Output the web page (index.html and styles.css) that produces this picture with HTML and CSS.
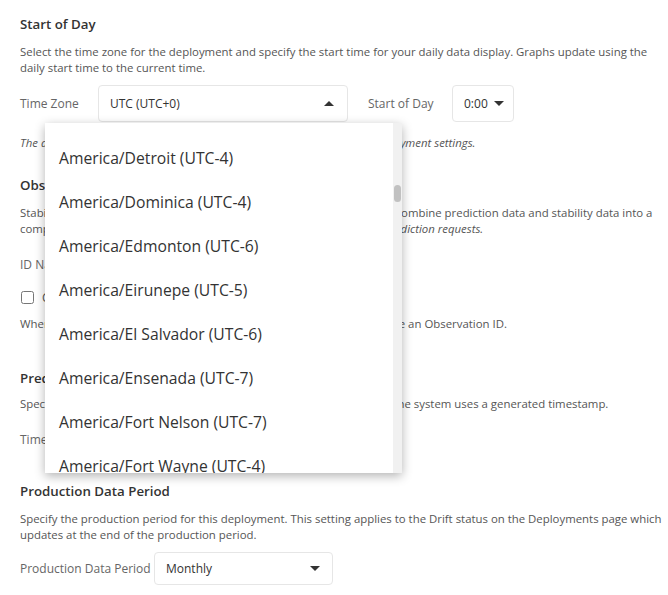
FILE: index.html
```html
<!DOCTYPE html>
<html lang="en">
<head>
    <meta charset="UTF-8">
    <meta name="viewport" content="width=device-width, initial-scale=1.0">
    <title>Deployment Settings</title>
    <link rel="stylesheet" href="styles.css">
</head>
<body>
    <div class="settings">
        <section class="section section-day">
            <h2>Start of Day</h2>
            <p>Select the time zone for the deployment and specify the start time for your daily data display. Graphs update using the daily start time to the current time.</p>
            <div class="field-row">
                <span class="field-label label-tz">Time Zone</span>
                <div class="select select-tz open">
                    <span>UTC (UTC+0)</span>
                    <span class="caret caret-up"></span>
                    <div class="dropdown">
                        <ul class="options">
                            <li>America/Denver (UTC-6)</li>
                            <li>America/Detroit (UTC-4)</li>
                            <li>America/Dominica (UTC-4)</li>
                            <li>America/Edmonton (UTC-6)</li>
                            <li>America/Eirunepe (UTC-5)</li>
                            <li>America/El Salvador (UTC-6)</li>
                            <li>America/Ensenada (UTC-7)</li>
                            <li>America/Fort Nelson (UTC-7)</li>
                            <li>America/Fort Wayne (UTC-4)</li>
                        </ul>
                        <div class="scrollbar"><div class="thumb"></div></div>
                    </div>
                </div>
                <span class="field-label label-start">Start of Day</span>
                <div class="select select-time">
                    <span>0:00</span>
                    <span class="caret"></span>
                </div>
            </div>
            <p class="note">The deployment time zone applies to all dates and times shown in the deployment settings.</p>
        </section>

        <section class="section section-obs">
            <h2>Observation ID</h2>
            <p>Stability data can include an Observation ID. The system uses the ID to combine prediction data and stability data into a complete record. <em>The ID field must also be sent with all of the incoming prediction requests.</em></p>
            <div class="field-row row-id">
                <span class="field-label">ID Name</span>
            </div>
            <label class="check-row">
                <input type="checkbox">
                <span>Generate Observation IDs</span>
            </label>
            <p class="hint">When selected, the system creates an ID for requests that do not include an Observation ID.</p>
        </section>

        <section class="section section-pred">
            <h2>Prediction Timestamp</h2>
            <p>Specify the timestamp field in your prediction dataset. If not specified, the system uses a generated timestamp.</p>
            <div class="field-row row-id">
                <span class="field-label">Timestamp Field</span>
            </div>
        </section>

        <section class="section section-period">
            <h2>Production Data Period</h2>
            <p>Specify the production period for this deployment. This setting applies to the Drift status on the Deployments page which updates at the end of the production period.</p>
            <div class="field-row row-period">
                <span class="field-label label-period">Production Data Period</span>
                <div class="select select-period">
                    <span>Monthly</span>
                    <span class="caret"></span>
                </div>
            </div>
        </section>
    </div>
</body>
</html>
```
FILE: styles.css
```css
body {
    margin: 0;
    font-family: 'Open Sans', 'Noto Sans', sans-serif;
    background-color: #fff;
    color: #555;
}

.settings {
    padding: 14px 4px 0 20px;
}

.section {
    margin-bottom: 24px;
}

h2 {
    margin: 0 0 10px;
    font-size: 13.3px;
    line-height: 20px;
    font-weight: 600;
    color: #333;
}

p {
    margin: 0;
    font-size: 11.4px;
    line-height: 16px;
}

.field-row {
    display: flex;
    align-items: center;
    height: 37px;
    margin-top: 9px;
}

.field-label {
    font-size: 12px;
    color: #666;
}

.label-tz {
    width: 78px;
}

.label-start {
    margin-left: 20px;
    width: 84px;
}

.label-period {
    width: 134px;
}

.select {
    position: relative;
    box-sizing: border-box;
    display: flex;
    align-items: center;
    justify-content: space-between;
    height: 37px;
    padding: 0 13px 0 11px;
    border: 1px solid #e6e6e6;
    border-radius: 4px;
    font-size: 12px;
    color: #333;
}

.select-tz {
    width: 250px;
}

.select-time {
    width: 62px;
    padding: 0 11px;
    justify-content: flex-start;
    gap: 6px;
}

.select-period {
    width: 179px;
    height: 33px;
    padding-right: 12px;
}

.caret {
    width: 0;
    height: 0;
    border-left: 5px solid transparent;
    border-right: 5px solid transparent;
    border-top: 5px solid #333;
}

.caret-up {
    border-top: none;
    border-bottom: 5px solid #333;
}

.note {
    margin-top: 13px;
    font-style: italic;
}

/* open time zone list */
.dropdown {
    position: absolute;
    top: 37px;
    left: -54px;
    width: 357px;
    height: 350px;
    overflow: hidden;
    background: #fff;
    box-shadow: 0 3px 10px rgba(0, 0, 0, 0.3);
    z-index: 10;
}

.options {
    list-style: none;
    margin: -31px 0 0;
    padding: 0;
}

.options li {
    height: 44px;
    line-height: 44px;
    padding-left: 14px;
    font-size: 15.7px;
    color: #333;
    white-space: nowrap;
}

.scrollbar {
    position: absolute;
    top: 0;
    right: 0;
    width: 9px;
    height: 100%;
    background: #f1f1f1;
}

.thumb {
    margin: 62px auto 0;
    width: 7px;
    height: 17px;
    border-radius: 4px;
    background: #c1c1c1;
}

.row-id {
    margin-top: 9px;
    height: 36px;
}

.check-row {
    display: flex;
    align-items: center;
    gap: 8px;
    margin-top: 6px;
    height: 18px;
    font-size: 12px;
}

.check-row input {
    margin: 0 0 0 1px;
    width: 13px;
    height: 13px;
}

.hint {
    margin-top: 10px;
}

.section-obs {
    margin-bottom: 36px;
}

.section-pred h2 {
    margin-bottom: 8px;
}

.row-period {
    margin-top: 9px;
    height: 33px;
}
```
